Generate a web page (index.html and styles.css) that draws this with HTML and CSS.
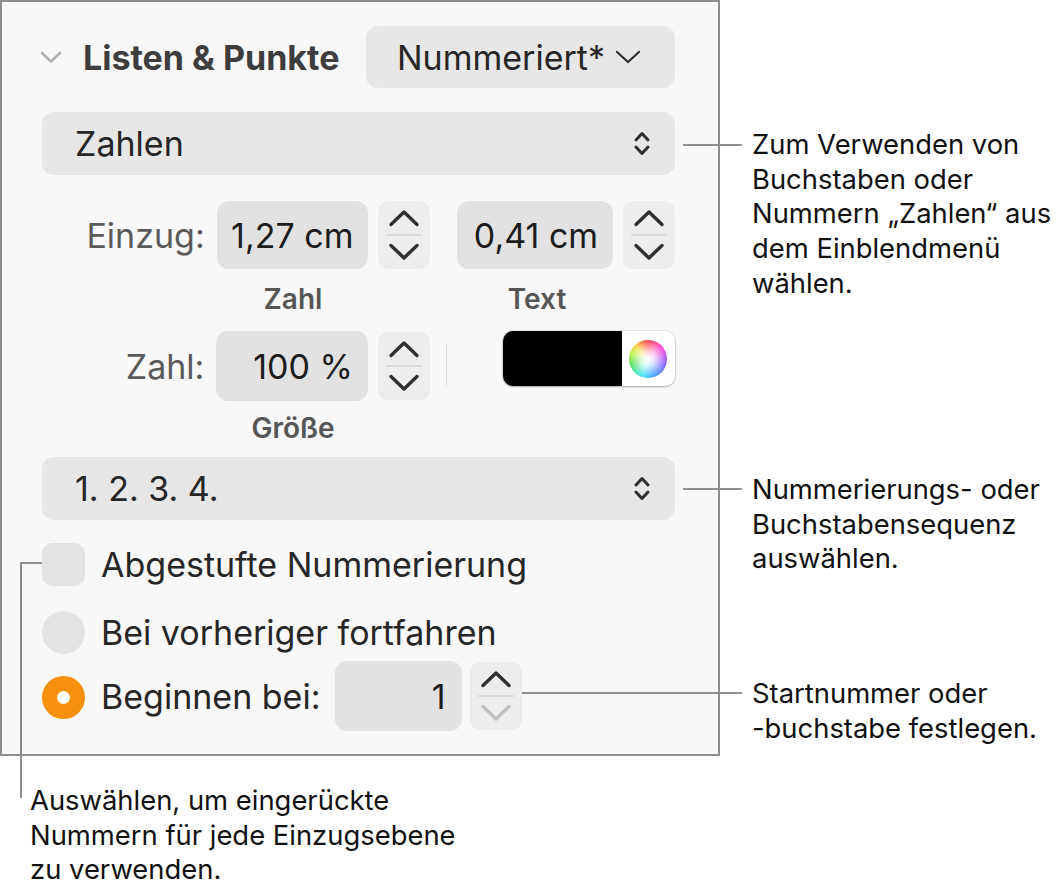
FILE: index.html
```html
<!DOCTYPE html>
<html lang="de">
<head>
  <meta charset="UTF-8">
  <meta name="viewport" content="width=device-width, initial-scale=1.0">
  <title>Listen &amp; Punkte</title>
  <link rel="stylesheet" href="styles.css">
</head>
<body>
  <div class="figure">
    <div class="panel">
      <div class="header">
        <svg class="disclosure" width="22" height="13" viewBox="0 0 22 13"><path d="M2 2 L11 10.5 L20 2" /></svg>
        <span class="title">Listen &amp; Punkte</span>
        <div class="style-btn">
          <span>Nummeriert*</span>
          <svg width="26" height="16" viewBox="0 0 26 16"><path d="M2 3 L13 13 L24 3" /></svg>
        </div>
      </div>

      <div class="popup">
        <span>Zahlen</span>
        <svg class="updown" width="16" height="27" viewBox="0 0 16 27"><path d="M2 10 L8 3.5 L14 10 M2 17 L8 23.5 L14 17" /></svg>
      </div>

      <div class="field-row">
        <span class="row-label">Einzug:</span>
        <div class="field">1,27 cm</div>
        <div class="stepper">
          <svg width="32" height="18" viewBox="0 0 32 18"><path d="M3 15.5 L16 3 L29 15.5" /></svg>
          <span class="stepper-line"></span>
          <svg width="32" height="18" viewBox="0 0 32 18"><path d="M3 2.5 L16 15 L29 2.5" /></svg>
        </div>
        <div class="field field-wide">0,41 cm</div>
        <div class="stepper stepper-narrow">
          <svg width="32" height="18" viewBox="0 0 32 18"><path d="M3 15.5 L16 3 L29 15.5" /></svg>
          <span class="stepper-line"></span>
          <svg width="32" height="18" viewBox="0 0 32 18"><path d="M3 2.5 L16 15 L29 2.5" /></svg>
        </div>
      </div>
      <div class="caption-row">
        <span class="caption cap-number">Zahl</span>
        <span class="caption cap-text">Text</span>
      </div>

      <div class="field-row row-size">
        <span class="row-label">Zahl:</span>
        <div class="field field-tall">100 %</div>
        <div class="stepper">
          <svg width="32" height="18" viewBox="0 0 32 18"><path d="M3 15.5 L16 3 L29 15.5" /></svg>
          <span class="stepper-line"></span>
          <svg width="32" height="18" viewBox="0 0 32 18"><path d="M3 2.5 L16 15 L29 2.5" /></svg>
        </div>
        <span class="separator"></span>
        <div class="color-well">
          <span class="swatch"></span>
          <span class="wheel-box"><span class="wheel"></span></span>
        </div>
      </div>
      <div class="caption-row caption-row-size">
        <span class="caption cap-number">Größe</span>
      </div>

      <div class="popup popup-seq">
        <span>1. 2. 3. 4.</span>
        <svg class="updown" width="16" height="27" viewBox="0 0 16 27"><path d="M2 10 L8 3.5 L14 10 M2 17 L8 23.5 L14 17" /></svg>
      </div>

      <div class="option option-check">
        <span class="checkbox"></span>
        <span>Abgestufte Nummerierung</span>
      </div>
      <div class="option option-radio">
        <span class="radio"></span>
        <span>Bei vorheriger fortfahren</span>
      </div>
      <div class="option option-start">
        <span class="radio radio-on"></span>
        <span>Beginnen bei:</span>
        <div class="field field-start">1</div>
        <div class="stepper stepper-start">
          <svg width="32" height="18" viewBox="0 0 32 18"><path d="M3 15.5 L16 3 L29 15.5" /></svg>
          <span class="stepper-line"></span>
          <svg class="disabled" width="32" height="18" viewBox="0 0 32 18"><path d="M3 2.5 L16 15 L29 2.5" /></svg>
        </div>
      </div>
    </div>

    <p class="note note-bottom">Auswählen, um eingerückte<br>Nummern für jede Einzugsebene<br>zu verwenden.</p>

    <!-- callouts on the right -->
    <span class="leader leader-1"></span>
    <p class="note note-1">Zum Verwenden von<br>Buchstaben oder<br>Nummern „Zahlen“ aus<br>dem Einblendmenü<br>wählen.</p>

    <span class="leader leader-2"></span>
    <p class="note note-2">Nummerierungs- oder<br>Buchstabensequenz<br>auswählen.</p>

    <span class="leader leader-3"></span>
    <p class="note note-3">Startnummer oder<br>-buchstabe festlegen.</p>

    <span class="leader leader-4h"></span>
    <span class="leader leader-4v"></span>
  </div>
</body>
</html>
```

FILE: styles.css
```css
body {
  margin: 0;
  background-color: #fff;
  font-family: Inter, "Noto Sans", sans-serif;
  color: #1c1c1c;
}

.figure {
  position: relative;
  width: 1061px;
  height: 886px;
  overflow: hidden;
}

.panel {
  box-sizing: border-box;
  width: 720px;
  height: 756px;
  padding: 24px 43px 0 40px;
  border: 2px solid #8e8e8e;
  background-color: #f8f8f8;
  font-size: 34px;
}

svg path {
  fill: none;
  stroke: #2e2e2e;
  stroke-width: 2.6;
  stroke-linecap: round;
  stroke-linejoin: round;
}

/* header */
.header {
  display: flex;
  align-items: center;
  height: 62px;
}

.disclosure {
  margin-left: -2px;
  margin-right: 21px;
}

.disclosure path {
  stroke: #b0b0b0;
  stroke-width: 2.6;
}

.title {
  font-weight: 700;
  color: #3d3d3d;
}

.style-btn {
  margin-left: auto;
  width: 309px;
  height: 62px;
  box-sizing: border-box;
  display: flex;
  align-items: center;
  gap: 10px;
  padding-left: 31px;
  border-radius: 12px;
  background-color: #e7e7e7;
  color: #262626;
}

.style-btn path {
  stroke-width: 2.2;
}

/* popups */
.popup {
  display: flex;
  align-items: center;
  justify-content: space-between;
  height: 63px;
  margin-top: 24px;
  padding: 0 25px 0 33px;
  border-radius: 12px;
  background-color: #e7e7e7;
  color: #262626;
}

.popup-seq {
  margin-top: 12px;
}

.updown path {
  stroke-width: 3;
}

/* number fields */
.field-row {
  display: flex;
  align-items: center;
  margin-top: 26px;
  height: 68px;
}

.row-label {
  width: 163px;
  margin-right: 12px;
  text-align: right;
  color: #5a5a5a;
}

.field {
  box-sizing: border-box;
  width: 152px;
  height: 68px;
  padding-right: 15px;
  border-radius: 12px;
  background-color: #e2e2e2;
  display: flex;
  align-items: center;
  justify-content: flex-end;
  color: #1c1c1c;
}

.field-wide {
  width: 156px;
  margin-left: 27px;
}

.field-tall {
  height: 70px;
}

.stepper {
  box-sizing: border-box;
  width: 52px;
  height: 68px;
  margin-left: 10px;
  border-radius: 10px;
  background-color: #ededed;
  display: flex;
  flex-direction: column;
  align-items: center;
  justify-content: center;
  gap: 7px;
}

.stepper-narrow {
  width: 52px;
  margin-left: 10px;
}

.stepper path {
  stroke-width: 3.4;
  stroke: #303030;
}

.stepper-line {
  width: 36px;
  height: 2px;
  background-color: #dadada;
}

.stepper .disabled path {
  stroke: #c0c0c0;
}

.caption-row {
  display: flex;
  height: 34px;
  margin-top: 13px;
  font-size: 28px;
  font-weight: 600;
  color: #565656;
}

.caption {
  text-align: center;
}

.cap-number {
  width: 152px;
  margin-left: 175px;
}

.cap-text {
  width: 156px;
  margin-left: 90px;
}

.row-size {
  margin-top: 15px;
  height: 70px;
  align-items: flex-start;
}

.row-size .row-label {
  align-self: center;
}

.row-size .stepper {
  margin-top: 1px;
}

.caption-row-size {
  margin-top: 10px;
}

.separator {
  width: 1px;
  height: 42px;
  margin: 13px 0 0 16px;
  background-color: #e0e0e0;
}

.color-well {
  display: flex;
  width: 173px;
  height: 55px;
  margin: 0 0 0 56px;
  border-radius: 10px;
  overflow: hidden;
  box-shadow: 0 1px 2px rgba(0, 0, 0, 0.25), 0 0 0 1px rgba(0, 0, 0, 0.08);
}

.swatch {
  width: 119px;
  background-color: #000;
}

.wheel-box {
  flex: 1;
  background-color: #fff;
  display: flex;
  align-items: center;
  justify-content: center;
}

.wheel {
  width: 38px;
  height: 38px;
  border-radius: 50%;
  background:
    radial-gradient(circle, #fff 0%, rgba(255, 255, 255, 0.8) 25%, rgba(255, 255, 255, 0) 72%),
    conic-gradient(#ff3d4a, #ff3dd0 50deg, #7b5cff 110deg, #3aa0ff 160deg, #3de6f0 200deg, #4be05a 250deg, #b8f03a 290deg, #ffd23a 320deg, #ff7a3a 340deg, #ff3d4a);
}

/* options */
.option {
  display: flex;
  align-items: center;
  height: 44px;
  gap: 16px;
  color: #262626;
}

.option-check {
  margin-top: 22px;
}

.option-radio {
  margin-top: 24px;
}

.option-start {
  margin-top: 7px;
  height: 70px;
}

.checkbox {
  width: 43px;
  height: 43px;
  border-radius: 10px;
  background-color: #e3e3e3;
}

.radio {
  width: 43px;
  height: 43px;
  border-radius: 50%;
  background-color: #e3e3e3;
}

.radio-on {
  box-sizing: border-box;
  margin-top: 3px;
  border: 15px solid #f7900c;
  background-color: #fff;
}

.field-start {
  width: 127px;
  height: 70px;
  margin-left: -1px;
  padding-right: 17px;
}

.stepper-start {
  width: 52px;
  height: 68px;
  margin-left: -8px;
}

/* callouts */
.note {
  margin: 0;
  font-size: 27.4px;
  line-height: 34.7px;
  color: #111;
}

.note-bottom {
  margin-top: 27px;
  padding-left: 30px;
}

.note-1,
.note-2,
.note-3 {
  position: absolute;
  left: 752px;
}

.note-1 { top: 127px; }
.note-2 { top: 472px; }
.note-3 { top: 676px; }

.leader {
  position: absolute;
  background-color: #8e8e8e;
}

.leader-1 { left: 683px; top: 144px; width: 59px; height: 2px; }
.leader-2 { left: 683px; top: 488px; width: 59px; height: 2px; }
.leader-3 { left: 522px; top: 692px; width: 220px; height: 2px; }
.leader-4h { left: 20px; top: 562px; width: 22px; height: 2px; }
.leader-4v { left: 20px; top: 562px; width: 2px; height: 236px; }
```
